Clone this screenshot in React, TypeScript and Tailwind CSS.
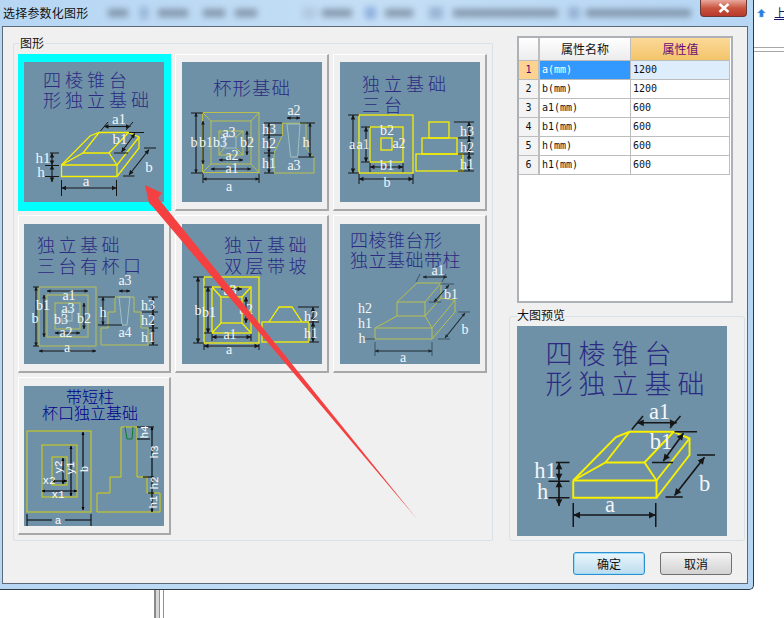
import type { ReactNode } from "react";

const BRIGHT = "#f7f000";
const OLIVE = "#b8c04e";
const INK = "#161616";
const TITLE = "#2c2a82";

function Dim({ from, to, s = 4.5, c = INK }: { from: number[]; to: number[]; s?: number; c?: string }) {
  const [x1, y1] = from;
  const [x2, y2] = to;
  const len = Math.hypot(x2 - x1, y2 - y1);
  const ux = (x2 - x1) / len;
  const uy = (y2 - y1) / len;
  const head = (x: number, y: number, d: number) => {
    const bx = x - d * ux * s;
    const by = y - d * uy * s;
    const w = s * 0.5;
    return `${x},${y} ${bx - uy * w},${by + ux * w} ${bx + uy * w},${by - ux * w}`;
  };
  return (
    <g>
      <line x1={x1} y1={y1} x2={x2} y2={y2} stroke={c} strokeWidth={1.1} />
      <polygon points={head(x1, y1, -1)} fill={c} />
      <polygon points={head(x2, y2, 1)} fill={c} />
    </g>
  );
}

function Lines({ d, c = INK, w = 1 }: { d: string[]; c?: string; w?: number }) {
  return (
    <g fill="none" stroke={c} strokeWidth={w}>
      {d.map((p) => (
        <polyline key={p} points={p} />
      ))}
    </g>
  );
}

function Box({ b, c, w = 1 }: { b: number[]; c: string; w?: number }) {
  return <rect x={b[0]} y={b[1]} width={b[2] - b[0]} height={b[3] - b[1]} fill="none" stroke={c} strokeWidth={w} />;
}

function Label({ x, y, t, size = 14 }: { x: number; y: number; t: string; size?: number }) {
  return (
    <text x={x} y={y} textAnchor="middle" fontSize={size} fill="#f4f6f8" fontFamily="'Liberation Serif', serif">
      {t}
    </text>
  );
}

function Heading({ x, y, t, gap = 4, size = 18, c = TITLE }: { x: number; y: number; t: string; gap?: number; size?: number; c?: string }) {
  return (
    <text x={x} y={y} fontSize={size} letterSpacing={gap} fill={c} fontFamily="'Noto Sans CJK SC', sans-serif" fontWeight={300}>
      {t}
    </text>
  );
}

function Pic({ children, className = "w-[140px] h-[140px]" }: { children: ReactNode; className?: string }) {
  return (
    <svg viewBox="0 0 140 140" className={`block overflow-visible bg-[#6e91a8] ${className}`}>
      {children}
    </svg>
  );
}

function Frustum() {
  return (
    <>
      <Heading x={19} y={25} t="四棱锥台" />
      <Heading x={19} y={45} t="形独立基础" />
      <Lines
        c={BRIGHT}
        w={1.3}
        d={[
          "37.5,103 93,103 93,114.5 37.5,114.5 37.5,103",
          "37.5,103 66,74 75,70.5 104.5,70.5 115,75 115,86 93,114.5",
          "93,103 115,75",
          "37.5,103 59,91 85,91 93,103",
          "59,91 75,70.5",
          "85,91 104.5,70.5",
        ]}
      />
      <Lines d={["76.5,69 84,60", "102,68 109,60", "90,91 104,91", "105,70.5 120,70.5", "99,114 110.5,114", "120,86 132,86", "37.5,118 37.5,134", "92.5,118 92.5,134", "26,91 35,91", "21,103.5 35,103.5", "21,114.5 35,114.5"]} />
      <Dim from={[80, 64.5]} to={[106.5, 64.5]} />
      <Dim from={[97.5, 90]} to={[111, 71.5]} />
      <Dim from={[105, 113]} to={[125, 87.5]} />
      <Dim from={[37.5, 126]} to={[92.5, 126]} />
      <Dim from={[28, 91]} to={[28, 103]} />
      <Dim from={[28, 103]} to={[28, 120]} />
      <Label x={95} y={62} t="a1" size={15} />
      <Label x={96} y={82} t="b1" size={15} />
      <Label x={19} y={101} t="h1" size={15} />
      <Label x={17} y={115} t="h" size={15} />
      <Label x={62} y={124} t="a" size={15} />
      <Label x={125} y={110} t="b" size={15} />
    </>
  );
}

function CupBase() {
  return (
    <>
      <Heading x={31} y={33} t="杯形基础" gap={1} size={18.5} />
      <Box b={[20.5, 50.5, 77, 110.5]} c={OLIVE} />
      <Box b={[29, 59, 69, 102]} c={OLIVE} />
      <Box b={[37, 69, 61, 93]} c={OLIVE} />
      <Box b={[42, 75, 54, 86]} c="#9fc0c0" />
      <Lines c={OLIVE} d={["20.5,50.5 29,59", "77,50.5 69,59", "20.5,110.5 29,102", "77,110.5 69,102", "37,69 42,75", "61,69 54,75", "37,93 42,86", "61,93 54,86"]} />
      <polygon points="100.5,61.3 124,61.3 124,86 132,96 132,111 92,111 92,91 100.5,73" fill="none" stroke={OLIVE} />
      <polygon points="105,62 118,62 115.7,95 108.7,95" fill="none" stroke="#9fc0c0" />
      <Lines d={["9,51 21,51", "9,111 21,111", "21,112 21,121", "77,112 77,121", "82,61 100,61", "82,73 100,73", "82,91 92,91", "82,111 92,111", "118,61 133,61", "116,95 132,95"]} />
      <Dim from={[14, 51]} to={[14, 111]} s={3.5} />
      <Dim from={[21, 59]} to={[21, 102]} s={3.5} />
      <Dim from={[21, 117]} to={[77, 117]} s={3.5} />
      <Dim from={[29, 107]} to={[69, 107]} s={3.5} />
      <Dim from={[37, 98]} to={[61, 98]} s={3.5} />
      <Dim from={[65, 69]} to={[65, 93]} s={3.5} />
      <Dim from={[87, 61]} to={[87, 73]} s={3.5} />
      <Dim from={[87, 73]} to={[87, 91]} s={3.5} />
      <Dim from={[87, 91]} to={[87, 111]} s={3.5} />
      <Dim from={[128, 61]} to={[128, 95]} s={3.5} />
      <Dim from={[105, 56]} to={[118, 56]} s={3.5} />
      <Label x={112} y={53} t="a2" />
      <Label x={12} y={85} t="b" />
      <Label x={24} y={85} t="b1" />
      <Label x={38} y={85} t="b3" />
      <Label x={47} y={75} t="a3" />
      <Label x={65} y={85} t="b2" />
      <Label x={50} y={98} t="a2" />
      <Label x={50} y={111} t="a1" />
      <Label x={47} y={129} t="a" />
      <Label x={87} y={72} t="h3" />
      <Label x={87} y={86} t="h2" />
      <Label x={87} y={106} t="h1" />
      <Label x={124} y={85} t="h" />
      <Label x={112} y={108} t="a3" />
    </>
  );
}

function ThreeStep() {
  return (
    <>
      <Heading x={22} y={29} t="独立基础" gap={4} />
      <Heading x={22} y={50} t="三台" gap={4} />
      <Box b={[19, 53, 73, 111]} c={BRIGHT} w={1.3} />
      <Box b={[30, 65, 63, 100]} c={BRIGHT} w={1.3} />
      <Box b={[41, 76, 52, 88]} c={BRIGHT} w={1.3} />
      <Box b={[89, 60, 109, 76]} c={BRIGHT} w={1.3} />
      <Box b={[82, 76, 117, 92]} c={BRIGHT} w={1.3} />
      <Box b={[76, 92, 123, 109]} c={BRIGHT} w={1.3} />
      <Lines d={["8,53 19,53", "8,111 19,111", "21,65 30,65", "21,100 30,100", "19,112 19,122", "73,112 73,122", "30,101 30,110", "63,101 63,110", "114,60 134,60", "118,76 134,76", "118,92 134,92", "118,109 134,109"]} />
      <Dim from={[13, 53]} to={[13, 111]} />
      <Dim from={[26, 65]} to={[26, 100]} />
      <Dim from={[19, 117]} to={[73, 117]} />
      <Dim from={[30, 105]} to={[63, 105]} />
      <Dim from={[129, 60]} to={[129, 76]} />
      <Dim from={[129, 76]} to={[129, 92]} />
      <Dim from={[129, 92]} to={[129, 109]} />
      <Label x={12} y={87} t="a" />
      <Label x={23} y={87} t="a1" />
      <Label x={47} y={73} t="b2" />
      <Label x={59} y={86} t="a2" />
      <Label x={47} y={108} t="b1" />
      <Label x={47} y={125} t="b" />
      <Label x={127} y={74} t="h3" />
      <Label x={127} y={90} t="h2" />
      <Label x={127} y={107} t="h1" />
    </>
  );
}

function ThreeStepCup() {
  return (
    <>
      <Heading x={13} y={28} t="独立基础" gap={3.5} />
      <Heading x={13} y={49} t="三台有杯口" gap={3.5} />
      <Box b={[15, 63, 72, 122]} c={OLIVE} />
      <Box b={[23, 71, 64, 113]} c={OLIVE} />
      <Box b={[31, 79, 56, 105]} c={OLIVE} />
      <Box b={[38, 87, 48, 97]} c="#9fc0c0" />
      <polygon points="91,73 110,73 110,88 117,88 117,104 124,104 124,121 77,121 77,104 84,104 84,88 91,88" fill="none" stroke={OLIVE} />
      <polygon points="95,73 106,73 103,101 98,101" fill="none" stroke="#9fc0c0" />
      <Lines d={["9,63 15,63", "9,122 15,122", "74,73 91,73", "74,101 98,101", "124,73 134,73", "118,88 134,88", "125,104 134,104", "125,121 134,121"]} />
      <Dim from={[12, 63]} to={[12, 122]} s={3.5} />
      <Dim from={[20, 71]} to={[20, 113]} s={3.5} />
      <Dim from={[15, 127]} to={[72, 127]} s={3.5} />
      <Dim from={[23, 67]} to={[64, 67]} s={3.5} />
      <Dim from={[31, 109]} to={[56, 109]} s={3.5} />
      <Dim from={[60, 79]} to={[60, 105]} s={3.5} />
      <Dim from={[95, 67]} to={[106, 67]} s={3.5} />
      <Dim from={[79, 73]} to={[79, 101]} s={3.5} />
      <Dim from={[129, 73]} to={[129, 88]} s={3.5} />
      <Dim from={[129, 88]} to={[129, 104]} s={3.5} />
      <Dim from={[129, 104]} to={[129, 121]} s={3.5} />
      <Label x={101} y={61} t="a3" />
      <Label x={79} y={93} t="h" />
      <Label x={45} y={76} t="a1" />
      <Label x={19} y={86} t="b1" />
      <Label x={11} y={99} t="b" />
      <Label x={44} y={89} t="a3" />
      <Label x={37} y={100} t="b3" />
      <Label x={60} y={99} t="b2" />
      <Label x={42} y={113} t="a2" />
      <Label x={43} y={128} t="a" />
      <Label x={101} y={113} t="a4" />
      <Label x={124} y={86} t="h3" />
      <Label x={124} y={101} t="h2" />
      <Label x={124} y={118} t="h1" />
    </>
  );
}

function TwoLayer() {
  return (
    <>
      <Heading x={42} y={28} t="独立基础" gap={3.5} />
      <Heading x={42} y={49} t="双层带坡" gap={3.5} />
      <Box b={[22, 53, 77, 119]} c={BRIGHT} w={1.3} />
      <Box b={[30, 63, 69, 109]} c={BRIGHT} w={1.3} />
      <Box b={[39, 73, 60, 99]} c={BRIGHT} w={1.3} />
      <Lines c={BRIGHT} w={1.3} d={["30,63 39,73", "69,63 60,73", "30,109 39,99", "69,109 60,99"]} />
      <Box b={[80, 98, 127, 118]} c={BRIGHT} w={1.3} />
      <Lines c={BRIGHT} w={1.3} d={["87,98 97,83 110,83 120,98"]} />
      <Lines d={["11,53 22,53", "11,119 22,119", "22,63 30,63", "22,109 30,109", "22,120 22,126", "77,120 77,126", "30,110 30,117", "69,110 69,117", "116,83 137,83", "127,98 137,98", "127,118 137,118"]} />
      <Dim from={[16, 53]} to={[16, 119]} />
      <Dim from={[26, 63]} to={[26, 109]} />
      <Dim from={[22, 122]} to={[77, 122]} />
      <Dim from={[30, 113]} to={[69, 113]} />
      <Dim from={[39, 65]} to={[60, 65]} />
      <Dim from={[64, 73]} to={[64, 99]} />
      <Dim from={[131, 83]} to={[131, 98]} />
      <Dim from={[131, 98]} to={[131, 118]} />
      <Label x={16} y={91} t="b" />
      <Label x={27} y={93} t="b1" />
      <Label x={48} y={71} t="a3" />
      <Label x={64} y={90} t="b2" />
      <Label x={48} y={115} t="a1" />
      <Label x={47} y={130} t="a" />
      <Label x={129} y={97} t="h2" />
      <Label x={129} y={114} t="h1" />
    </>
  );
}

function FrustumColumn() {
  return (
    <>
      <Heading x={10} y={23} t="四棱锥台形" gap={0.5} />
      <Heading x={10} y={43} t="独立基础带柱" gap={0.5} />
      <Lines
        c={OLIVE}
        d={[
          "35,104 92,104 92,115 35,115 35,104",
          "92,115 115,88 115,76 92,104",
          "35,104 57,92 85,92 92,104",
          "57,92 57,78 85,78 85,92",
          "57,78 77,59 101,59 85,78",
          "101,59 101,74 85,92",
          "101,74 115,76",
        ]}
      />
      <Lines c="#2a3a44" w={0.7} d={["76,58 80,50", "102,58 106,50", "89,78 101,78", "100,60 114,60", "98,115 110,115", "118,88 130,88", "35,118 35,132", "92,118 92,132", "24,115 35,115"]} />
      <Dim from={[83, 53]} to={[107, 53]} c="#1f2a30" s={3.5} />
      <Dim from={[94, 78]} to={[109, 61]} c="#1f2a30" s={3.5} />
      <Dim from={[105, 114]} to={[125, 89]} c="#1f2a30" s={3.5} />
      <Dim from={[35, 127]} to={[92, 127]} c="#1f2a30" s={3.5} />
      <Label x={98} y={51} t="a1" />
      <Label x={111} y={75} t="b1" />
      <Label x={125} y={110} t="b" />
      <Label x={63} y={138} t="a" />
      <Label x={25} y={89} t="h2" />
      <Label x={25} y={104} t="h1" />
      <Label x={22} y={119} t="h" />
    </>
  );
}

function MonoLabel({ x, y, t, turn = false }: { x: number; y: number; t: string; turn?: boolean }) {
  return (
    <text
      x={x}
      y={y}
      textAnchor="middle"
      fontSize={11}
      fill="#ffffff"
      fontFamily="'Liberation Mono', monospace"
      transform={turn ? `rotate(-90 ${x} ${y})` : undefined}
    >
      {t}
    </text>
  );
}

function ShortColumnCup() {
  return (
    <>
      <text x={66} y={17} textAnchor="middle" fontSize={16} fill="#00008b" fontFamily="'Noto Sans CJK SC', sans-serif" fontWeight={300}>
        带短柱
      </text>
      <text x={66} y={33} textAnchor="middle" fontSize={16} fill="#00008b" fontFamily="'Noto Sans CJK SC', sans-serif" fontWeight={300}>
        杯口独立基础
      </text>
      <Box b={[3, 45, 67, 126]} c="#d4cf0a" />
      <Box b={[18, 59, 53, 111]} c="#d4cf0a" />
      <Box b={[28, 71, 43, 99]} c="#d4cf0a" />
      <polygon points="97,41 113,41 113,91 123,91 123,107 136,107 136,126 73,126 73,107 86,107 86,91 97,91" fill="none" stroke="#d4cf0a" />
      <polyline points="101,41 103,53 108,53 109,41" fill="none" stroke="#0a7d24" />
      <Lines c="#000000" d={["3,134 28,134", "41,134 67,134", "3,128 3,140", "67,128 67,140", "113,41 130,41", "113,53 126,53", "119,91 130,91", "124,107 130,107"]} />
      <Dim from={[59, 46]} to={[59, 124]} s={3} c="#000000" />
      <Dim from={[47, 60]} to={[47, 110]} s={3} c="#000000" />
      <Dim from={[39, 72]} to={[39, 98]} s={3} c="#000000" />
      <Dim from={[18, 105]} to={[53, 105]} s={3} c="#000000" />
      <Dim from={[28, 95]} to={[43, 95]} s={3} c="#000000" />
      <Dim from={[128, 41]} to={[128, 126]} s={3} c="#000000" />
      <MonoLabel x={34} y={138} t="a" />
      <MonoLabel x={25} y={98} t="x2" />
      <MonoLabel x={34} y={112} t="x1" />
      <MonoLabel x={38} y={81} t="y2" turn />
      <MonoLabel x={50} y={82} t="y1" turn />
      <MonoLabel x={64} y={83} t="b" turn />
      <MonoLabel x={124} y={46} t="h4" turn />
      <MonoLabel x={134} y={66} t="h3" turn />
      <MonoLabel x={134} y={97} t="h2" turn />
      <MonoLabel x={133} y={116} t="h1" turn />
    </>
  );
}

const shapes = [
  { key: "frustum", art: <Frustum />, cell: "pl-[6px] pt-[8px] bg-[#00ffff]" },
  { key: "cup", art: <CupBase />, cell: "pl-[6px] pt-[7px] bg-[#f0f0f0] border-l border-t border-l-white border-t-white border-r-2 border-b-2 border-r-[#a8a8a8] border-b-[#a8a8a8]" },
  { key: "three", art: <ThreeStep />, cell: "pl-[6px] pt-[7px] bg-[#f0f0f0] border-l border-t border-l-white border-t-white border-r-2 border-b-2 border-r-[#a8a8a8] border-b-[#a8a8a8]" },
  { key: "threeCup", art: <ThreeStepCup />, cell: "pl-[5px] pt-[8px] bg-[#f0f0f0] border-l border-t border-l-white border-t-white border-r-2 border-b-2 border-r-[#a8a8a8] border-b-[#a8a8a8]" },
  { key: "two", art: <TwoLayer />, cell: "pl-[6px] pt-[8px] bg-[#f0f0f0] border-l border-t border-l-white border-t-white border-r-2 border-b-2 border-r-[#a8a8a8] border-b-[#a8a8a8]" },
  { key: "column", art: <FrustumColumn />, cell: "pl-[6px] pt-[8px] bg-[#f0f0f0] border-l border-t border-l-white border-t-white border-r-2 border-b-2 border-r-[#a8a8a8] border-b-[#a8a8a8]" },
  { key: "short", art: <ShortColumnCup />, cell: "pl-[5px] pt-[8px] bg-[#f0f0f0] border-l border-t border-l-white border-t-white border-r-2 border-b-2 border-r-[#a8a8a8] border-b-[#a8a8a8]" },
];

const props = [
  ["a(mm)", "1200"],
  ["b(mm)", "1200"],
  ["a1(mm)", "600"],
  ["b1(mm)", "600"],
  ["h(mm)", "600"],
  ["h1(mm)", "600"],
];

const toolbarBlur = [
  "ml-[18px] w-[20px]",
  "ml-[12px] w-[8px] h-[12px] bg-[#7d9ac0]",
  "ml-[10px] w-[30px]",
  "ml-[15px] w-[22px]",
  "ml-[10px] w-[22px]",
  "ml-[45px] w-[14px] h-[12px] bg-[#a9bdd4]",
  "ml-[6px] w-[30px]",
  "ml-[13px] w-[11px] h-[12px] bg-[#6c93d0]",
  "ml-[9px] w-[28px]",
  "ml-[16px] w-[14px] h-[12px] bg-[#7d9ac0]",
  "ml-[10px] w-[105px]",
  "ml-[10px] w-[12px] h-[12px] bg-[#7d9ac0]",
  "ml-[6px] w-[105px]",
];

function PropTable() {
  return (
    <div className="ml-[8px] w-[216px] h-[267px] border-2 border-[#adb0b4] bg-white text-[12px] text-[#111]">
      <div className="grid grid-cols-[21px_91px_99px] h-[23px]">
        <div className="bg-gradient-to-b from-white to-[#ececec] border-r-2 border-b border-[#bdbdbd]" />
        <div className="flex items-center justify-center bg-gradient-to-b from-white to-[#ececec] border-r border-b border-[#bdbdbd]">属性名称</div>
        <div className="flex items-center justify-center bg-gradient-to-b from-[#fcd998] to-[#f3c46a] border-b border-[#bdbdbd] text-[#6b0a78]">属性值</div>
      </div>
      {props.map(([name, val], i) => (
        <div key={name} className="grid grid-cols-[21px_91px_99px] h-[19px] font-['DejaVu_Sans_Mono',monospace] text-[10px] leading-[18px]">
          <div className={`text-center border-r-2 border-b border-[#bdbdbd] ${i === 0 ? "bg-[#fdd38f] text-[#4b0a78]" : "bg-[#f3f3f3]"}`}>{i + 1}</div>
          <div className={`pl-[2px] border-r border-b border-[#bdbdbd] ${i === 0 ? "bg-[#3399ff] text-white" : ""}`}>{name}</div>
          <div className={`pl-[2px] border-r border-b border-[#bdbdbd] ${i === 0 ? "bg-[#deedfc]" : ""}`}>{val}</div>
        </div>
      ))}
    </div>
  );
}

export default function App() {
  return (
    <div className="relative w-[784px] h-[618px] overflow-hidden bg-white font-['Noto_Sans_CJK_SC',sans-serif] text-[12px] text-[#111]">
      <div className="flex h-[590px]">
        {/* dialog */}
        <div className="flex flex-col w-[754px] border-r border-b border-[#2f3a44] rounded-br-[5px] bg-gradient-to-r from-[#b6d6f4] via-[#c4def5] to-[#b6d6f4]">
          <div className="flex items-center h-[26px] pl-[3px] overflow-hidden">
            <span className="shrink-0 w-[87px] tracking-[0.2px] text-[12px]">选择参数化图形</span>
            <div className="flex items-center flex-1 min-w-0 overflow-hidden blur-[3px] opacity-60">
              {toolbarBlur.map((c) => (
                <div key={c} className={`shrink-0 h-[8px] bg-[#5d6b7c] ${c}`} />
              ))}
            </div>
            <button className="shrink-0 self-start flex items-center justify-center w-[47px] h-[17px] mr-[6px] rounded-b-[4px] border border-t-0 border-[#6a3a36] bg-gradient-to-b from-[#e8a79c] via-[#c9543f] to-[#b8392a]" aria-label="关闭">
              <svg viewBox="0 0 12 10" className="w-[12px] h-[10px]">
                <path d="M1.5 1 L10.5 9 M10.5 1 L1.5 9" stroke="#ffffff" strokeWidth="2.4" fill="none" />
              </svg>
            </button>
          </div>

          <div className="flex flex-col h-[558px] ml-[2px] mr-[5px] border border-[#5c6a78] bg-[#f0f0f0]">
            <div className="flex items-start pl-[10px] pt-[9px]">
              {/* thumbnails */}
              <div className="w-[480px] h-[498px] mt-[7px] pl-[4px] border border-[#d9e1e8] rounded-[2px]">
                <div className="-mt-[8px] ml-[1px] w-fit h-[14px] px-[1px] leading-[14px] bg-[#f0f0f0]">图形</div>
                <div className="grid grid-cols-[153px_154px_154px] grid-rows-[157px_158px_158px] gap-x-[4px] gap-y-[4px] mt-[4px]">
                  {shapes.map((s) => (
                    <div key={s.key} className={s.cell}>
                      <Pic>{s.art}</Pic>
                    </div>
                  ))}
                </div>
              </div>

              {/* right column */}
              <div className="w-[236px] ml-[16px]">
                <PropTable />
                <div className="h-[225px] mt-[13px] pl-[7px] border border-[#d9e1e8] rounded-[3px]">
                  <div className="-mt-[9px] w-fit h-[14px] leading-[14px] bg-[#f0f0f0]">大图预览</div>
                  <div className="mt-[4px]">
                    <Pic className="w-[210px] h-[210px]">
                      <Frustum />
                    </Pic>
                  </div>
                </div>
              </div>
            </div>

            <div className="flex justify-end gap-[15px] mt-[11px] mr-[15px]">
              <button className="w-[72px] h-[23px] rounded-[3px] border border-[#2c8fd0] bg-gradient-to-b from-[#eaf6fc] to-[#bcdcee] shadow-[inset_0_0_0_1px_#9ddcf7]">确定</button>
              <button className="w-[72px] h-[23px] rounded-[3px] border border-[#707070] bg-gradient-to-b from-[#f4f4f4] to-[#d2d2d2]">取消</button>
            </div>
          </div>
        </div>

        {/* page behind the dialog */}
        <div className="flex-1 flex flex-col overflow-hidden">
          <div className="flex items-center gap-[8px] h-[24px] pl-[3px] pt-[1px]">
            <svg viewBox="0 0 10 10" className="w-[9px] h-[10px] shrink-0">
              <path d="M5 0.5 L9.5 5 H7 V9.5 H3 V5 H0.5 Z" fill="#2b7fe0" stroke="#9cc4f0" strokeWidth="0.5" />
            </svg>
            <span className="shrink-0 text-[12px] text-[#1a1a6e] underline">上</span>
          </div>
          <div className="mt-[23px] h-[5px] border-y border-[#a8a8a8]" />
        </div>
      </div>

      {/* drawing lines below the dialog */}
      <div className="flex h-[28px] ml-[154px]">
        <div className="w-[2px] h-full bg-[#8a8a8a]" />
        <div className="w-[3px] h-full bg-[#d8d8d8]" />
        <div className="w-px h-full bg-[#909090]" />
        <div className="w-[3px] h-full" />
        <div className="w-px h-full bg-[#909090]" />
      </div>

      {/* red annotation arrow */}
      <svg viewBox="0 0 784 618" className="absolute inset-0 w-[784px] h-[618px] pointer-events-none">
        <polygon points="145,185 162,193 158,198 417,519 153,207 149,203" fill="#f44040" />
      </svg>
    </div>
  );
}
